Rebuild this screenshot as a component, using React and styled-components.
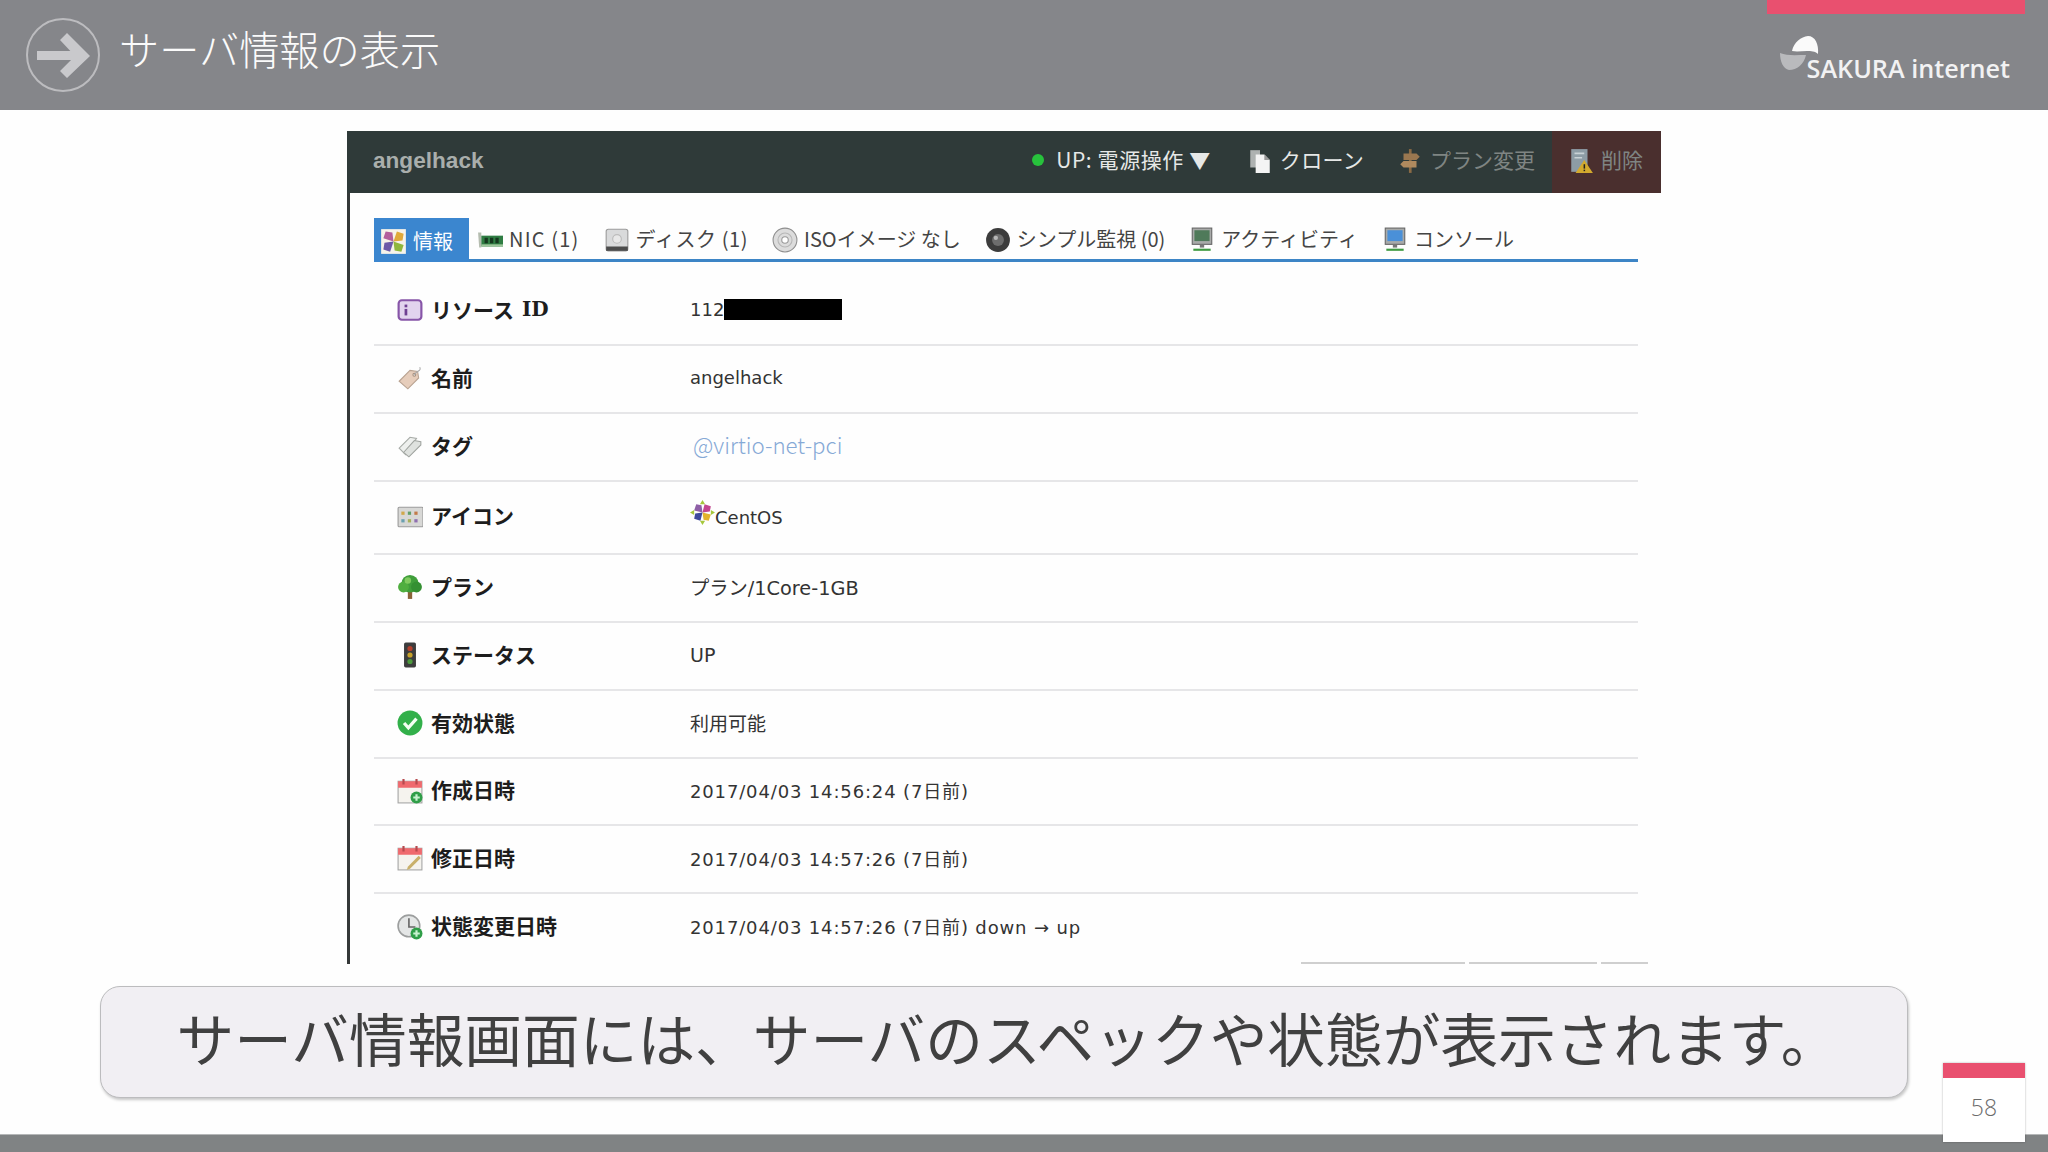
import React from "react";
import styled, { createGlobalStyle } from "styled-components";

const GlobalStyle = createGlobalStyle`
  html, body { margin: 0; padding: 0; background: #fff; }
  * { box-sizing: border-box; }
`;

const JP = `"Noto Sans CJK JP", "Noto Sans", sans-serif`;
const VALUE = `"DejaVu Sans", "Noto Sans CJK JP", sans-serif`;

const Slide = styled.div`
  position: relative;
  width: 2048px;
  height: 1152px;
  overflow: hidden;
  display: flex;
  flex-direction: column;
  background: #fefefe;
  font-family: ${JP};
`;

const Header = styled.header`
  height: 110px;
  flex: none;
  background: #85868a;
  display: flex;
  justify-content: space-between;
  padding-left: 26px;
`;

const TitleGroup = styled.div`
  display: flex;
  align-items: center;
  gap: 19px;
`;

const Title = styled.h1`
  margin: 0 0 14px;
  font-size: 40.2px;
  line-height: 1;
  font-weight: 300;
  color: #fbfbfb;
`;

const HeaderRight = styled.div`
  display: flex;
  flex-direction: column;
  align-items: flex-end;
  padding-right: 23px;
`;

const PinkBar = styled.div`
  width: 258px;
  height: 14px;
  background: #e9506f;
`;

const Logo = styled.div`
  display: flex;
  align-items: flex-start;
  margin: 22px 15px 0 0;
`;

const LogoText = styled.span`
  margin-left: -15px;
  margin-top: 17px;
  font-family: "Open Sans", sans-serif;
  font-size: 25.2px;
  line-height: 30px;
  font-weight: 600;
  color: #f2f2f3;
  white-space: nowrap;
`;

const Panel = styled.section`
  width: 1314px;
  margin: 21px 0 0 347px;
  flex: none;
`;

const PanelBar = styled.div`
  height: 62px;
  background: #2f3a39;
  display: flex;
  align-items: stretch;
  justify-content: space-between;
  padding-left: 26px;
`;

const ServerName = styled.span`
  align-self: center;
  margin-bottom: 3px;
  font-family: "Liberation Sans", sans-serif;
  font-weight: 700;
  font-size: 22.6px;
  color: #a9aeac;
`;

const Actions = styled.div`
  display: flex;
  align-items: stretch;
`;

const Action = styled.div`
  display: flex;
  align-items: center;
  gap: 7px;
  margin-right: ${(p) => p.$mr || 0}px;
  padding: ${(p) => (p.$danger ? "0 18px 5px 16px" : "0 0 5px 0")};
  background: ${(p) => (p.$danger ? "#4a2f2e" : "transparent")};
  color: ${(p) => (p.$dim ? "#7f8583" : "#e6e8e7")};
  font-size: 21px;
  letter-spacing: ${(p) => p.$ls || 0}px;
  line-height: 1;
  white-space: nowrap;

  svg {
    margin-top: 3px;
  }
`;

const StatusDot = styled.span`
  width: 12px;
  height: 12px;
  border-radius: 50%;
  background: #27c23c;
  margin-right: 5px;
`;

const PanelBody = styled.div`
  height: 771px;
  border-left: 3px solid #343838;
  padding: 25px 23px 0 24px;
  display: flex;
  flex-direction: column;
`;

const Tabs = styled.nav`
  height: 44px;
  display: flex;
  border-bottom: 3px solid #3d85c6;
  margin-bottom: 16px;
  flex: none;
`;

const Tab = styled.div`
  display: flex;
  align-items: center;
  gap: 6px;
  height: ${(p) => (p.$active ? "44px" : "41px")};
  padding: 0 ${(p) => (p.$active ? "16px" : "11px")} 0 ${(p) => (p.$active ? "6px" : "13px")};
  margin-right: ${(p) => (p.$active ? "-5px" : "0")};
  background: ${(p) => (p.$active ? "#3b86cf" : "transparent")};
  color: ${(p) => (p.$active ? "#fff" : "#444")};
  font-size: 20px;
  letter-spacing: ${(p) => p.$ls || 0}px;
  white-space: nowrap;

  svg {
    margin-top: 2px;
  }
`;

const Rows = styled.div`
  display: flex;
  flex-direction: column;
`;

const Row = styled.div`
  height: ${(p) => p.$h || 68}px;
  display: grid;
  grid-template-columns: 293px 1fr;
  align-items: center;
  padding: 0 0 3px 23px;
  border-bottom: ${(p) => (p.$last ? "none" : "2px solid #e6e6e8")};
`;

const Label = styled.div`
  display: flex;
  align-items: center;
  gap: 8px;
  padding-bottom: 2px;
  font-size: 21px;
  font-weight: 700;
  color: #1d1d1d;
  white-space: nowrap;

  svg {
    margin-top: 3px;
  }
`;

const SerifLatin = styled.span`
  font-family: "DejaVu Serif", serif;
  font-size: 20px;
`;

const Value = styled.div`
  display: flex;
  align-items: center;
  font-family: ${(p) => (p.$light ? JP : VALUE)};
  font-weight: ${(p) => (p.$light ? 300 : 400)};
  font-size: ${(p) => p.$size || 18}px;
  letter-spacing: ${(p) => p.$ls || 0}px;
  color: ${(p) => p.$color || "#333"};
  margin-left: ${(p) => p.$ml || 0}px;
  padding-bottom: ${(p) => (p.$light ? 3 : 0)}px;
  white-space: nowrap;
`;

const Redacted = styled.span`
  display: inline-block;
  width: 118px;
  height: 21px;
  background: #000;
`;

const RaisedIcon = styled.span`
  display: inline-flex;
  margin-top: -8px;
`;

const CentOsText = styled.span`
  margin-top: 3px;
`;

const Ticks = styled.div`
  display: flex;
  justify-content: flex-end;
  gap: 4px;
  margin: 1px -10px 0 0;
`;

const Tick = styled.span`
  width: ${(p) => p.$w}px;
  height: 2px;
  background: #cfcfcf;
`;

const Caption = styled.div`
  width: 1808px;
  height: 112px;
  margin: 22px 0 0 100px;
  flex: none;
  display: flex;
  align-items: center;
  justify-content: center;
  padding: 0 0 9px 7px;
  background: #f1eff3;
  border: 1px solid #bcbcbe;
  border-radius: 20px;
  box-shadow: 1px 2px 3px rgba(0, 0, 0, 0.22);
  font-size: 57.7px;
  font-weight: 400;
  line-height: 1;
  color: #404040;
  white-space: nowrap;
`;

const Footer = styled.footer`
  height: 18px;
  margin-top: auto;
  background: #808384;
  border-top: 1px solid #b5b7b8;
  flex: none;
`;

const PageBox = styled.div`
  position: absolute;
  left: 1943px;
  top: 1063px;
  width: 82px;
  height: 79px;
  background: #fff;
  box-shadow: 0 0 2px rgba(0, 0, 0, 0.3);
  display: flex;
  flex-direction: column;
`;

const PageStripe = styled.div`
  height: 15px;
  background: #e9506f;
  flex: none;
`;

const PageNum = styled.div`
  flex: 1;
  display: flex;
  align-items: center;
  justify-content: center;
  padding-bottom: 6px;
  font-family: "Open Sans", sans-serif;
  font-weight: 300;
  font-size: 23px;
  color: #6b6b6b;
`;

const Ic = ({ s = 26, children }) => (
  <svg width={s} height={s} viewBox="0 0 24 24" style={{ flex: "none" }}>{children}</svg>
);

const ArrowCircle = () => (
  <svg width="74" height="74" viewBox="0 0 74 74" style={{ flex: "none" }}>
    <circle cx="37" cy="37" r="36" fill="none" stroke="#bcbcbf" strokeWidth="2" />
    <path d="M11 33H49V42H11Z M41 15L64 38L41 60L34 53L49 38L34 22Z M46 33L53 38L46 42Z" fill="#c9c9cc" />
  </svg>
);

const SakuraMark = () => (
  <svg width="42" height="36" viewBox="0 0 42 36" style={{ flex: "none" }}>
    <path d="M12 15C14 6 21 1 28 0C35 0 39 8 38 18C35 15 31 15 27 15C22 15 17 16 12 15Z" fill="#fafafa" />
    <path d="M0 17C7 20 16 19 26 19C24 28 17 34 9 34C3 33 0 25 0 17Z" fill="#b9babd" />
  </svg>
);

const Pinwheel = ({ s = 26 }) => (
  <Ic s={s}>
    <path d="M12 12L4 10L6 4L11 5Z" fill="#8e5fa6" />
    <path d="M12 12L14 4L20 6L19 11Z" fill="#c2478f" />
    <path d="M12 12L20 14L18 20L13 19Z" fill="#e2b32c" />
    <path d="M12 12L10 20L4 18L5 13Z" fill="#3e4a9c" />
    <path d="M12 0L14.5 4H9.5Z M12 24L14.5 20H9.5Z M0 12L4 9.5V14.5Z M24 12L20 9.5V14.5Z" fill="#a6c83c" />
  </Ic>
);

const InfoTabIcon = () => (
  <Ic s={27}>
    <rect x="1" y="1" width="22" height="22" fill="#f6f3ea" />
    <path d="M12 12L3 9L5 3L11 4Z" fill="#b35f9c" />
    <path d="M12 12L15 3L21 5L20 11Z" fill="#e0a93a" />
    <path d="M12 12L21 15L19 21L13 20Z" fill="#8fb73c" />
    <path d="M12 12L9 21L3 19L4 13Z" fill="#6c5aa8" />
  </Ic>
);

const NicIcon = () => (
  <Ic>
    <path d="M1 5H4V19H2Z" fill="#b5bdb0" />
    <rect x="4" y="8" width="20" height="10" fill="#2f7d43" />
    <path d="M7 10h3v5H7zM12 10h3v5h-3zM17 10h3v5h-3z" fill="#16381f" />
    <rect x="4" y="16" width="20" height="2" fill="#9ec79c" />
  </Ic>
);

const DiskIcon = () => (
  <Ic>
    <rect x="2" y="2" width="20" height="20" rx="2" fill="#d9dadb" stroke="#9a9a9a" />
    <circle cx="12" cy="11" r="4" fill="#e8e8e8" stroke="#bbb" />
    <rect x="2" y="18" width="20" height="4" fill="#4c4c4c" />
  </Ic>
);

const CdIcon = () => (
  <Ic>
    <circle cx="12" cy="12" r="11" fill="#dcdcdc" stroke="#8f8f8f" />
    <circle cx="12" cy="12" r="6.5" fill="none" stroke="#b7b7b7" />
    <circle cx="12" cy="12" r="3" fill="#fff" stroke="#999" />
  </Ic>
);

const LensIcon = () => (
  <Ic>
    <circle cx="12" cy="12" r="11" fill="#3c3c3c" />
    <circle cx="12" cy="12" r="5.5" fill="#6d6d6d" />
    <circle cx="10" cy="10" r="2" fill="#b8b8b8" />
  </Ic>
);

const MonitorIcon = ({ screen }) => (
  <Ic>
    <rect x="3" y="1" width="18" height="15" fill="#a8aaa9" stroke="#666" />
    <rect x="5" y="3" width="14" height="10" fill={screen} />
    <rect x="10" y="16" width="4" height="3" fill="#777" />
    <path d="M4 20H20V22H4Z" fill="#3f9a42" />
  </Ic>
);

const CloneIcon = () => (
  <Ic>
    <path d="M3 2H12L12 18H3Z" fill="#aeb2b1" />
    <path d="M8 6H16L21 11V23H8Z" fill="#f4f4f4" />
    <path d="M16 6L21 11H16Z" fill="#9a9a9a" />
  </Ic>
);

const SignIcon = () => (
  <Ic>
    <rect x="11" y="1" width="2.5" height="22" fill="#8a6a45" />
    <path d="M6 5H18L21 8L18 11H6Z" fill="#9a7750" />
    <path d="M18 12H6L3 15L6 18H18Z" fill="#b08a5e" />
  </Ic>
);

const TrashWarnIcon = () => (
  <Ic>
    <rect x="3" y="1" width="15" height="21" fill="#8d9ca5" />
    <path d="M6 5H15M6 9H13" stroke="#c9d2d6" strokeWidth="1.5" />
    <path d="M15 11L23 23H7Z" fill="#d3aa2e" />
    <rect x="14.4" y="15" width="1.4" height="4" fill="#222" />
    <rect x="14.4" y="20" width="1.4" height="1.4" fill="#222" />
  </Ic>
);

const IdIcon = () => (
  <Ic>
    <rect x="1.5" y="3" width="21" height="18" rx="3" fill="#e2d4ee" stroke="#8755a8" strokeWidth="2" />
    <rect x="7" y="7" width="2.5" height="2.5" fill="#6f3f92" />
    <rect x="7" y="11" width="2.5" height="6" fill="#6f3f92" />
  </Ic>
);

const NameTagIcon = () => (
  <Ic>
    <path d="M2 15L12 5L19 6L20 12L10 22Z" fill="#e6cdbb" stroke="#b9a392" />
    <circle cx="16" cy="9" r="1.3" fill="#fff" stroke="#a58f7e" />
    <path d="M16 9C18 5 23 6 21 2" fill="none" stroke="#aaa" />
  </Ic>
);

const TagsIcon = () => (
  <Ic>
    <path d="M2 14L12 4L18 5L8 20Z" fill="#eef0ee" stroke="#a8aca8" />
    <path d="M6 18L16 7L22 8L22 11L11 22Z" fill="#dfe2df" stroke="#a0a4a0" />
  </Ic>
);

const IconsIcon = () => (
  <Ic>
    <rect x="1" y="3" width="23" height="18" rx="1" fill="#d8d8d6" stroke="#9a9a9a" />
    <path d="M4 7h3v3H4z" fill="#d0a84a" />
    <path d="M10 7h3v3h-3z" fill="#5f9f6a" />
    <path d="M16 7h3v3h-3z" fill="#c27a4a" />
    <path d="M4 14h3v3H4z" fill="#6aa0b0" />
    <path d="M10 14h3v3h-3z" fill="#a7b15a" />
    <path d="M16 14h3v3h-3z" fill="#8f6fb0" />
  </Ic>
);

const TreeIcon = () => (
  <Ic>
    <rect x="10" y="15" width="4" height="8" fill="#8a6238" />
    <circle cx="12" cy="9" r="8" fill="#3f9e3a" />
    <circle cx="6" cy="12" r="5" fill="#4fae3f" />
    <circle cx="18" cy="12" r="5" fill="#349032" />
    <circle cx="10" cy="6" r="3" fill="#7fca5e" />
  </Ic>
);

const LightIcon = () => (
  <Ic>
    <rect x="6.5" y="0.5" width="11" height="23" rx="1.5" fill="#3d3d3d" />
    <circle cx="12" cy="6" r="2.4" fill="#b5402c" />
    <circle cx="12" cy="12" r="2.4" fill="#c7a12a" />
    <circle cx="12" cy="18" r="2.4" fill="#4c9a3c" />
  </Ic>
);

const CheckIcon = () => (
  <Ic>
    <circle cx="12" cy="12" r="11.5" fill="#32b04a" />
    <path d="M6.5 12L10.5 16.5L18 8" fill="none" stroke="#f2fff2" strokeWidth="3" />
  </Ic>
);

const CalBase = ({ children }) => (
  <Ic>
    <rect x="1" y="3" width="22" height="20" fill="#f5f3ee" stroke="#a5a5a5" />
    <rect x="1" y="3" width="22" height="6" fill="#ef6a6e" />
    <path d="M6 1V6M18 1V6" stroke="#b64a4e" strokeWidth="2" />
    {children}
  </Ic>
);

const Plus = () => (
  <g>
    <circle cx="18" cy="18" r="5.5" fill="#2f9e48" />
    <path d="M15 18H21M18 15V21" stroke="#c8f2cf" strokeWidth="2" />
  </g>
);

const CalPlusIcon = () => <CalBase><Plus /></CalBase>;
const CalEditIcon = () => (
  <CalBase>
    <path d="M10 20L20 10L22 12L12 22L9 23Z" fill="#c9b06a" />
  </CalBase>
);

const ClockIcon = () => (
  <Ic>
    <circle cx="11" cy="11" r="10" fill="#e4e6e6" stroke="#9c9e9e" strokeWidth="1.5" />
    <path d="M11 4V12H17" fill="none" stroke="#666" strokeWidth="1.5" />
    <Plus />
  </Ic>
);

const tabs = [
  { Icon: NicIcon, text: "NIC (1)", ls: 1.2 },
  { Icon: DiskIcon, text: "ディスク (1)", ls: 0.6 },
  { Icon: CdIcon, text: "ISOイメージ なし" },
  { Icon: LensIcon, text: "シンプル監視 (0)" },
  { Icon: () => <MonitorIcon screen="#4f7a5a" />, text: "アクティビティ" },
  { Icon: () => <MonitorIcon screen="#4a90d8" />, text: "コンソール" },
];

const rows = [
  { Icon: IdIcon, label: <>リソース <SerifLatin>ID</SerifLatin></>, value: <>112<Redacted /></> },
  { Icon: NameTagIcon, label: "名前", value: "angelhack" },
  { Icon: TagsIcon, label: "タグ", value: "@virtio-net-pci", color: "#86a9d6", ml: 3, light: true, size: 22.3 },
  { Icon: IconsIcon, label: "アイコン", value: <><RaisedIcon><Pinwheel s={25} /></RaisedIcon><CentOsText>CentOS</CentOsText></>, h: 73 },
  { Icon: TreeIcon, label: "プラン", value: "プラン/1Core-1GB", size: 19.3 },
  { Icon: LightIcon, label: "ステータス", value: "UP", size: 19 },
  { Icon: CheckIcon, label: "有効状態", value: "利用可能", size: 19 },
  { Icon: CalPlusIcon, label: "作成日時", value: "2017/04/03 14:56:24 (7日前)", h: 67, ls: 0.85 },
  { Icon: CalEditIcon, label: "修正日時", value: "2017/04/03 14:57:26 (7日前)", ls: 0.85 },
  { Icon: ClockIcon, label: "状態変更日時", value: "2017/04/03 14:57:26 (7日前) down → up", h: 67, ls: 0.85, last: true },
];

export default function App() {
  return (
    <>
      <GlobalStyle />
      <Slide>
        <Header>
          <TitleGroup>
            <ArrowCircle />
            <Title>サーバ情報の表示</Title>
          </TitleGroup>
          <HeaderRight>
            <PinkBar />
            <Logo>
              <SakuraMark />
              <LogoText>SAKURA internet</LogoText>
            </Logo>
          </HeaderRight>
        </Header>

        <Panel>
          <PanelBar>
            <ServerName>angelhack</ServerName>
            <Actions>
              <Action $mr={36} $ls={0.6}>
                <StatusDot />
                UP: 電源操作 ▼
              </Action>
              <Action $mr={33} $ls={0.3}>
                <CloneIcon />
                クローン
              </Action>
              <Action $dim $mr={17}>
                <SignIcon />
                プラン変更
              </Action>
              <Action $danger $dim>
                <TrashWarnIcon />
                削除
              </Action>
            </Actions>
          </PanelBar>
          <PanelBody>
            <Tabs>
              <Tab $active>
                <InfoTabIcon />
                情報
              </Tab>
              {tabs.map(({ Icon, text, ls }) => (
                <Tab key={text} $ls={ls}>
                  <Icon />
                  {text}
                </Tab>
              ))}
            </Tabs>
            <Rows>
              {rows.map(({ Icon, label, value, color, ml, h, last, size, ls, light }, i) => (
                <Row key={i} $h={h} $last={last}>
                  <Label>
                    <Icon />
                    {label}
                  </Label>
                  <Value $color={color} $ml={ml} $size={size} $ls={ls} $light={light}>{value}</Value>
                </Row>
              ))}
            </Rows>
            <Ticks>
              <Tick $w={164} />
              <Tick $w={128} />
              <Tick $w={47} />
            </Ticks>
          </PanelBody>
        </Panel>

        <Caption>サーバ情報画面には、サーバのスペックや状態が表示されます。</Caption>
        <Footer />
        <PageBox>
          <PageStripe />
          <PageNum>58</PageNum>
        </PageBox>
      </Slide>
    </>
  );
}
